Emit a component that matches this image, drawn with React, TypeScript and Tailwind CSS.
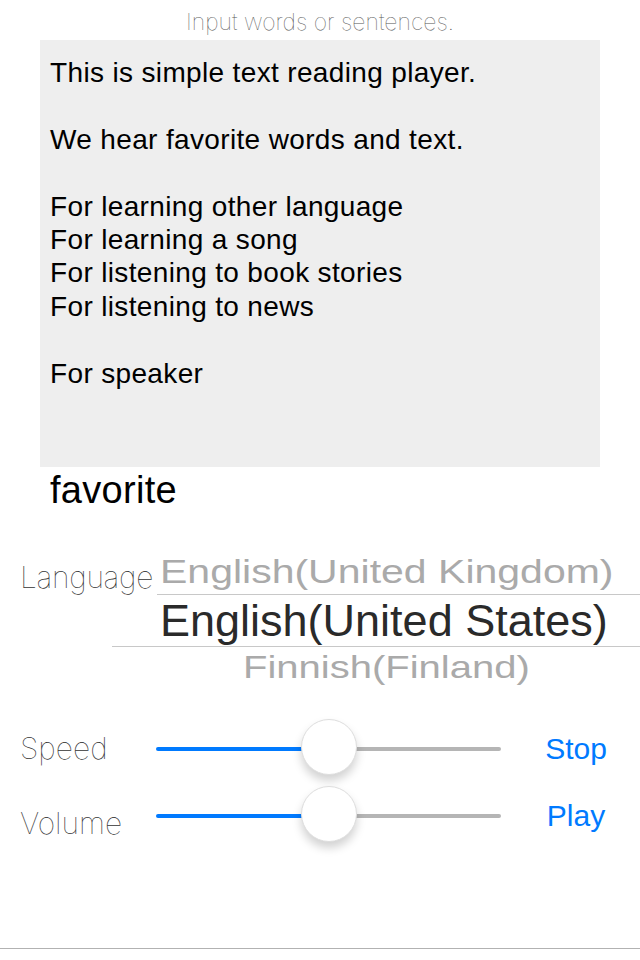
const lines = [
  "This is simple text reading player.",
  "",
  "We hear favorite words and text.",
  "",
  "For learning other language",
  "For learning a song",
  "For listening to book stories",
  "For listening to news",
  "",
  "For speaker",
];

const thin = "font-['Inter',sans-serif] font-thin text-[#333]";
const sans = "font-['Liberation_Sans',Arial,sans-serif]";

function Slider({ label, action, drop }: { label: string; action: string; drop?: boolean }) {
  return (
    <div className="flex items-center h-[67px]">
      <span className={`${thin} text-[30px] w-[156px] pl-5 ${drop ? "pt-[16px]" : ""}`}>{label}</span>
      <div className="flex items-center w-[345px] relative">
        <div className="h-[4px] w-[146px] bg-[#007aff] rounded-l-full" />
        <div className="h-[4px] flex-1 bg-[#b5b5b5] rounded-r-full" />
        <div className="absolute left-[145px] -mt-[3px] w-[56px] h-[56px] rounded-full bg-white border border-[#dedede] shadow-[0_6px_10px_rgba(0,0,0,0.18)]" />
      </div>
      <span className={`${sans} text-[30px] text-[#007aff] flex-1 text-center pl-[11px]`}>{action}</span>
    </div>
  );
}

export default function App() {
  return (
    <div className="w-[640px] h-[960px] bg-white flex flex-col">
      <p className={`${thin} text-center text-[23px] text-[#555] h-[40px] leading-[44px]`}>
        Input words or sentences.
      </p>
      <div className={`${sans} mx-[40px] h-[427px] bg-[#eeeeee] pt-[16px] pl-[10px] text-[28px] tracking-[0.35px] leading-[33.4px] text-black`}>
        {lines.map((l, i) => (
          <div key={i} className="h-[33.4px]">{l}</div>
        ))}
      </div>
      <p className={`${sans} pl-[50px] text-[38px] tracking-[0.3px] leading-[46px] text-black`}>favorite</p>

      <div className="mt-[31px] flex flex-col">
        <div className="flex items-end h-[50px]">
          <span className={`${thin} text-[30px] tracking-[-0.3px] pl-5 w-[160px] h-[34px] leading-[34px] whitespace-nowrap`}>Language</span>
          <span className={`${sans} text-[41px] h-[44px] leading-[44px] text-[#aaaaaa] scale-y-[0.8] whitespace-nowrap`}>English(United Kingdom)</span>
        </div>
        <div className="ml-[157px] border-t border-[#c8c8c8]" />
        <div className={`${sans} h-[51px] pl-[160px] text-[45px] leading-[51px] text-[#2a2a2a] whitespace-nowrap`}>English(United States)</div>
        <div className="ml-[112px] border-t border-[#c8c8c8]" />
        <div className={`${sans} h-[40px] pl-[243px] text-[40px] leading-[40px] text-[#aaaaaa] scale-y-[0.8] whitespace-nowrap`}>Finnish(Finland)</div>
      </div>

      <div className="mt-[28px] flex flex-col">
        <Slider label="Speed" action="Stop" />
        <Slider label="Volume" action="Play" drop />
      </div>

      <div className="mt-auto mb-[11px] border-t border-[#b2b2b2]" />
    </div>
  );
}
